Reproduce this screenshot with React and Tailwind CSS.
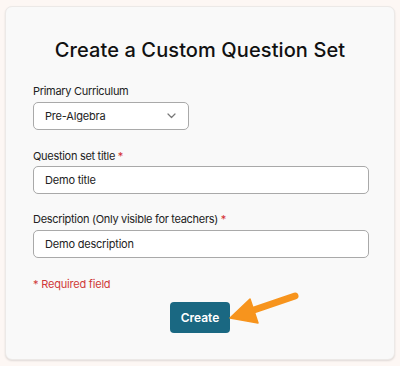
import React from "react";

export default function App() {
  const font = { fontFamily: "Inter, 'Noto Sans', sans-serif" };
  return (
    <div className="w-[400px] h-[366px] bg-[#fdf7f4] pt-[6px] pl-[5px]" style={font}>
      <div className="relative w-[390px] h-[354px] rounded-[7px] border border-[#ece9e7] bg-[#f9f9f9] shadow-[0_1px_2px_rgba(0,0,0,0.12)] px-[27px] pt-[29px] flex flex-col">
        <h1 className="text-center text-[20px] leading-[28px] text-[#111] font-medium tracking-[0.1px]">
          Create a Custom Question Set
        </h1>

        <label className="mt-[19px] text-[11px] leading-[16px] tracking-[-0.3px] text-[#222]">Primary Curriculum</label>
        <div className="mt-[3px] w-[156px] h-[28px] rounded-[5px] border border-[#a9a9a9] bg-white flex items-center justify-between pl-[11px] pr-[12px]">
          <span className="text-[11px] tracking-[-0.2px] text-[#222]">Pre-Algebra</span>
          <svg width="9" height="6" viewBox="0 0 9 6" fill="none">
            <path d="M1 1l3.5 3.5L8 1" stroke="#777" strokeWidth="1.2" strokeLinecap="round" strokeLinejoin="round" />
          </svg>
        </div>

        <label className="mt-[18px] text-[11px] leading-[16px] tracking-[-0.3px] text-[#222]">
          Question set title <span className="text-[#d32f2f]">*</span>
        </label>
        <div className="mt-[2px] w-[336px] h-[28px] rounded-[5px] border border-[#a9a9a9] bg-white flex items-center pl-[11px]">
          <span className="text-[11px] tracking-[-0.2px] text-[#222]">Demo title</span>
        </div>

        <label className="mt-[17px] text-[11px] leading-[16px] tracking-[-0.3px] text-[#222]">
          Description (Only visible for teachers) <span className="text-[#d32f2f]">*</span>
        </label>
        <div className="mt-[3px] w-[336px] h-[28px] rounded-[5px] border border-[#a9a9a9] bg-white flex items-center pl-[11px]">
          <span className="text-[11px] tracking-[-0.2px] text-[#222]">Demo description</span>
        </div>

        <p className="mt-[18px] text-[11px] leading-[16px] tracking-[-0.2px] text-[#d0393a]">* Required field</p>

        <div className="mt-[10px] flex justify-center">
          <button className="w-[60px] h-[31px] rounded-[4px] bg-[#1a6882] text-white text-[12px] font-semibold">
            Create
          </button>
        </div>

        <svg className="absolute left-0 top-0 pointer-events-none" width="390" height="354" viewBox="0 0 390 354">
          <g transform="translate(-6,-7)">
            <line x1="295" y1="296" x2="248" y2="312" stroke="#f7941d" strokeWidth="7" strokeLinecap="round" />
            <polygon points="230,318 250,299 258,323" fill="#f7941d" stroke="#f7941d" strokeWidth="1.5" strokeLinejoin="round" />
          </g>
        </svg>
      </div>
    </div>
  );
}
